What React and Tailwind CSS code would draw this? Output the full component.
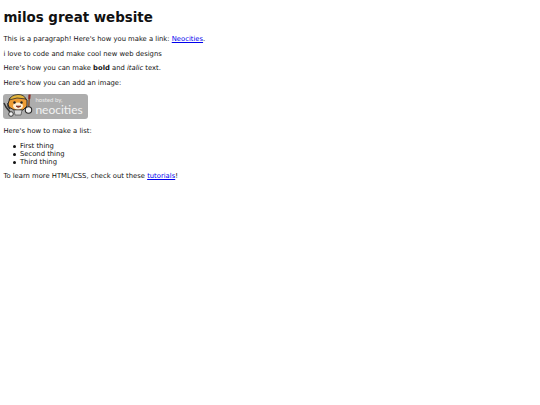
const Badge = () => (
  <div className="relative w-[85px] h-[25px] rounded-[3px] bg-[#adadad] overflow-hidden">
    {/* cat mascot */}
    <svg viewBox="0 0 34 25" className="absolute left-0 top-0 w-[34px] h-[25px]">
      <path d="M1 9 L3 13 L7 18 M5 9 L5 12 L7 15" fill="none" stroke="#333" strokeWidth="1.5" />
      <path d="M5 10 L7 4 L13 3 L20 3 L24 6 L24 12 L20 16 L11 16 L6 13 Z" fill="#ee9d34" stroke="#2b2b2b" strokeWidth="1" />
      <path d="M6 6 Q8 1 15 0.5 Q21 0.5 23 5 L14 4 Z" fill="#e3b53e" stroke="#2b2b2b" strokeWidth="0.8" />
      <ellipse cx="15" cy="12" rx="5" ry="3.4" fill="#fff1d8" />
      <circle cx="11.5" cy="8.5" r="1.2" fill="#222" />
      <circle cx="18.5" cy="8.5" r="1.2" fill="#222" />
      <path d="M13 12 Q15 15 18 12 Z" fill="#b9482f" stroke="#5e2316" strokeWidth="0.6" />
      <path d="M26.5 1 L25.7 13" stroke="#8a5a34" strokeWidth="1.7" />
      <path d="M25.6 0.5 L27.6 0.5 L27.2 5 L25.4 5 Z" fill="#8e2b2b" />
      <circle cx="25.5" cy="16" r="3.2" fill="#f4f4f4" stroke="#2b2b2b" strokeWidth="1.1" />
      <path d="M11 16 L19 16 L18 21 L12 21 Z" fill="#d8d8d8" stroke="#333" strokeWidth="0.6" />
      <circle cx="8" cy="20" r="2.3" fill="#f4f4f4" stroke="#2b2b2b" strokeWidth="0.9" />
    </svg>
    <div className="absolute left-[32px] top-[3px] text-[6px] leading-[6px] text-[#eeeeee] font-['Lato',sans-serif]">hosted by,</div>
    <div className="absolute left-[32px] top-[9px] text-[12px] leading-[13px] text-[#f2f2f2] font-['Lato',sans-serif]">neocities</div>
  </div>
);

export default function App() {
  return (
    <div className="min-h-[405px] bg-white px-[3.4px] pt-[10.1px] text-[6.8px] leading-[7.9px] text-[#111111] font-['DejaVu_Sans',sans-serif]">
      <h1 className="text-[13.4px] leading-[15.9px] font-bold">milos great website</h1>
      <p className="mt-[9.6px]">
        This is a paragraph! Here's how you make a link: <a href="#" className="text-[#0000ee] underline">Neocities</a>.
      </p>
      <p className="mt-[7px]">i love to code and make cool new web designs</p>
      <p className="mt-[7px]">
        Here's how you can make <strong className="font-bold">bold</strong> and <em className="italic">italic</em> text.
      </p>
      <p className="mt-[7px]">Here's how you can add an image:</p>
      <div className="mt-[5.8px]"><Badge /></div>
      <p className="mt-[8.6px]">Here's how to make a list:</p>
      <ul className="mt-[7.2px] pl-[10px]">
        <li className="flex items-center"><span className="w-[2.4px] h-[2.4px] rounded-full bg-[#111111] mr-[4.2px]"></span>First thing</li>
        <li className="flex items-center"><span className="w-[2.4px] h-[2.4px] rounded-full bg-[#111111] mr-[4.2px]"></span>Second thing</li>
        <li className="flex items-center"><span className="w-[2.4px] h-[2.4px] rounded-full bg-[#111111] mr-[4.2px]"></span>Third thing</li>
      </ul>
      <p className="mt-[7px]">
        To learn more HTML/CSS, check out these <a href="#" className="text-[#0000ee] underline">tutorials</a>!
      </p>
    </div>
  );
}
